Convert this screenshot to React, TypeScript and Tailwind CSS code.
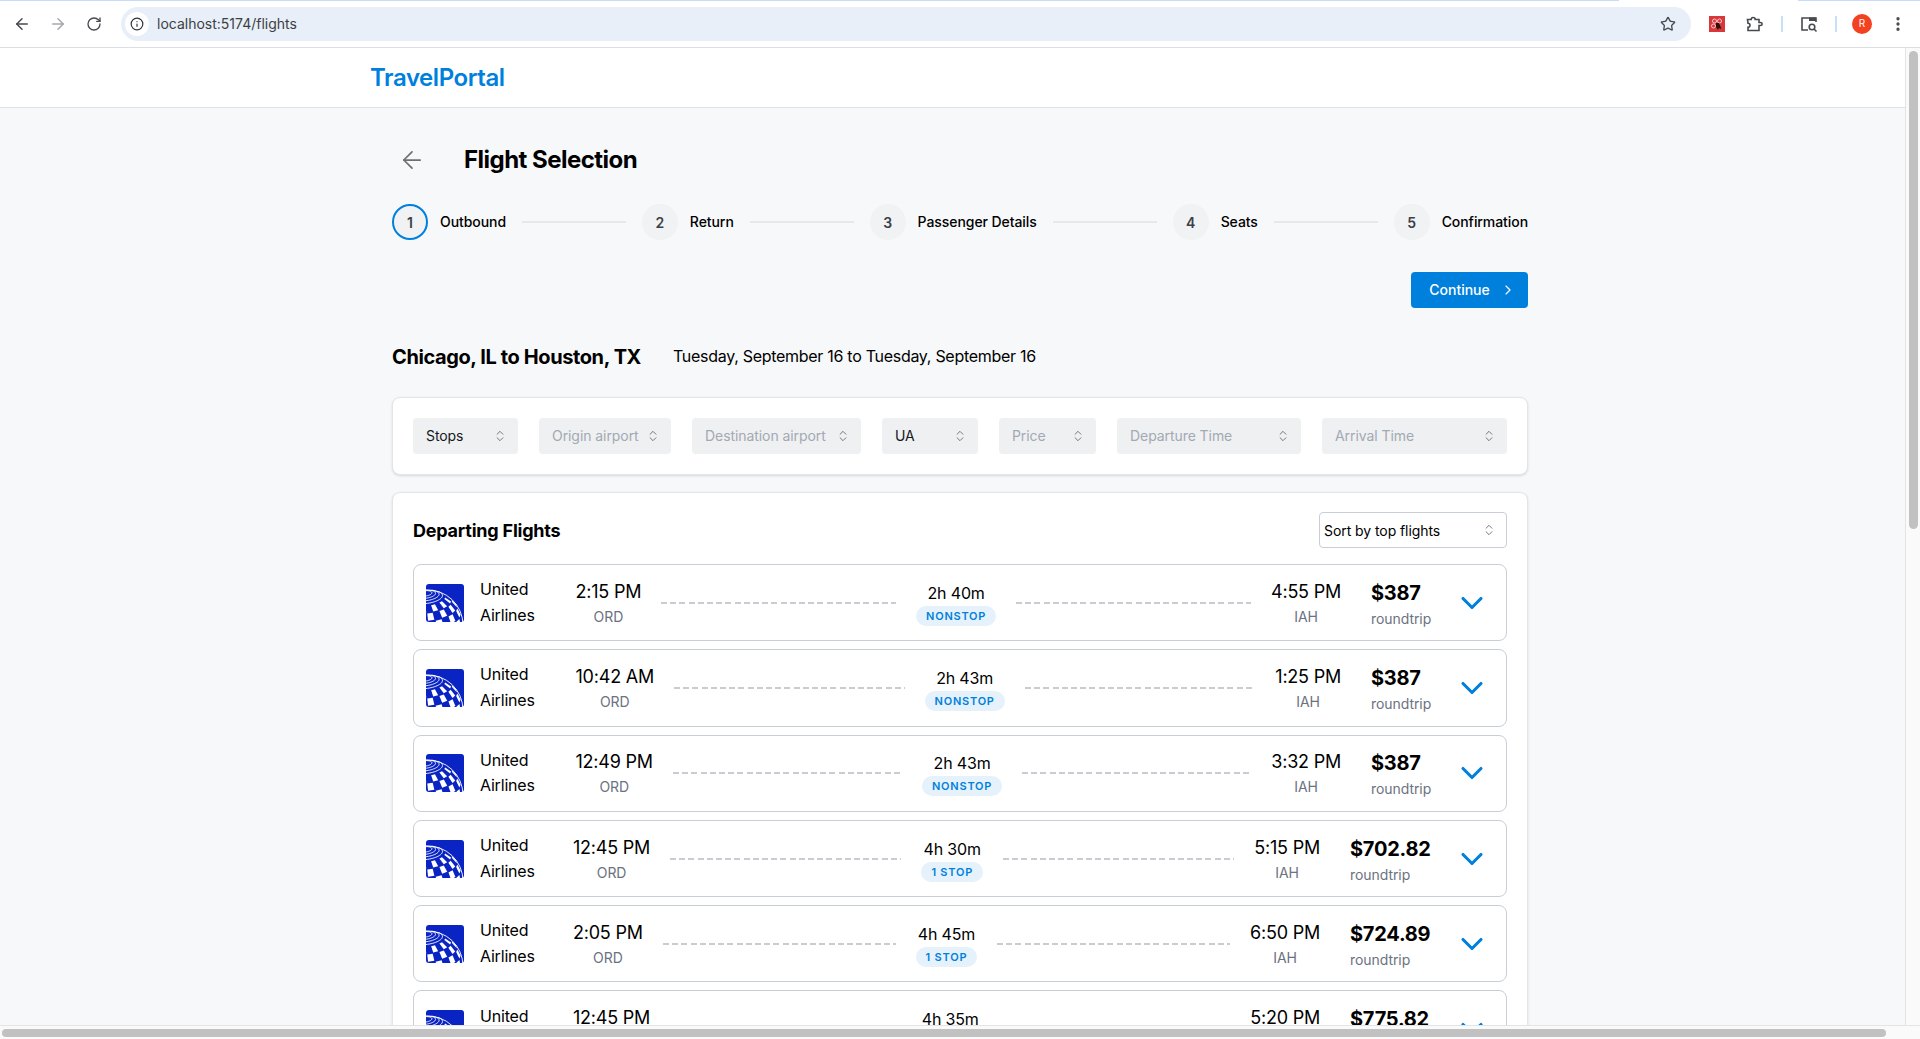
import { Fragment } from "react"
import { ArrowLeft, ArrowRight, ChevronDown, ChevronRight, ChevronsUpDown, EllipsisVertical, Info, RotateCw, Star } from "lucide-react"

const steps = ["Outbound", "Return", "Passenger Details", "Seats", "Confirmation"]

const filters = [
  { label: "Stops", width: "w-[105px]", active: true },
  { label: "Origin airport", width: "w-[132px]", active: false },
  { label: "Destination airport", width: "w-[169px]", active: false },
  { label: "UA", width: "w-[96px]", active: true },
  { label: "Price", width: "w-[97px]", active: false },
  { label: "Departure Time", width: "w-[184px]", active: false },
  { label: "Arrival Time", width: "w-[185px]", active: false },
]

const flights = [
  { depart: "2:15 PM", arrive: "4:55 PM", duration: "2h 40m", stops: "NONSTOP", price: "$387", wide: false },
  { depart: "10:42 AM", arrive: "1:25 PM", duration: "2h 43m", stops: "NONSTOP", price: "$387", wide: false },
  { depart: "12:49 PM", arrive: "3:32 PM", duration: "2h 43m", stops: "NONSTOP", price: "$387", wide: false },
  { depart: "12:45 PM", arrive: "5:15 PM", duration: "4h 30m", stops: "1 STOP", price: "$702.82", wide: true },
  { depart: "2:05 PM", arrive: "6:50 PM", duration: "4h 45m", stops: "1 STOP", price: "$724.89", wide: true },
  { depart: "12:45 PM", arrive: "5:20 PM", duration: "4h 35m", stops: "1 STOP", price: "$775.82", wide: true },
]

// orthographic sphere for the logo: checker cells, thin rings near the pole
function project(lat: number, lon: number) {
  const tilt = (22 * Math.PI) / 180
  const roll = (6 * Math.PI) / 180
  const la = (lat * Math.PI) / 180
  const lo = (lon * Math.PI) / 180
  const x = Math.cos(la) * Math.sin(lo)
  const y = Math.sin(la)
  const z = Math.cos(la) * Math.cos(lo)
  const y2 = y * Math.cos(tilt) - z * Math.sin(tilt)
  const z2 = y * Math.sin(tilt) + z * Math.cos(tilt)
  const x3 = x * Math.cos(roll) - y2 * Math.sin(roll)
  const y3 = x * Math.sin(roll) + y2 * Math.cos(roll)
  return { x: 2 + 35 * x3, y: 41 - 35 * y3, z: z2 }
}

function globeCells() {
  const out: string[] = []
  for (let i = -6; i < 4; i++) {
    for (let j = -12; j < 12; j++) {
      if ((i + j) % 2 !== 0) continue
      const la = i * 14
      const lo = j * 14
      const pts = [project(la + 1, lo + 1), project(la + 1, lo + 13), project(la + 13, lo + 13), project(la + 13, lo + 1)]
      if (pts.some((p) => p.z < 0.02)) continue
      out.push(pts.map((p) => `${p.x.toFixed(2)},${p.y.toFixed(2)}`).join(" "))
    }
  }
  return out
}

function globeRings() {
  const out: string[] = []
  for (const lat of [60, 66, 72, 78]) {
    const pts: string[] = []
    for (let lon = -180; lon <= 180; lon += 6) {
      const p = project(lat, lon)
      if (p.z > 0) pts.push(`${p.x.toFixed(2)},${p.y.toFixed(2)}`)
    }
    out.push(pts.join(" "))
  }
  return out
}

const cells = globeCells()
const rings = globeRings()

function UnitedLogo() {
  return (
    <svg width="38" height="38" viewBox="0 0 38 38" className="shrink-0">
      <rect width="38" height="38" rx="3" fill="#0a24c4" />
      {cells.map((c) => (
        <polygon key={c} points={c} fill="#fff" />
      ))}
      {rings.map((r) => (
        <polyline key={r} points={r} fill="none" stroke="#fff" strokeWidth="0.9" />
      ))}
      <path d="M0 6.1A35 35 0 0 1 37 41" fill="none" stroke="#fff" strokeWidth="0.9" />
    </svg>
  )
}

function BrowserBar() {
  return (
    <div className="relative flex h-[48px] shrink-0 items-center border-b border-[#dcdee1] bg-white">
      <div className="absolute inset-x-0 top-0 flex h-[1px]">
        <div className="w-[1619px] bg-[#c6dcf8]" />
        <div className="w-[179px]" />
        <div className="flex-1 bg-[#c6dcf8]" />
      </div>
      <div className="flex w-[121px] shrink-0 items-center pl-[13px]">
        <ArrowLeft size={18} strokeWidth={2} className="text-[#474a4f]" />
        <ArrowRight size={18} strokeWidth={2} className="ml-[18px] text-[#a5a7aa]" />
        <RotateCw size={16} strokeWidth={2} className="ml-[19px] text-[#474a4f]" />
      </div>
      <div className="flex h-[34px] w-[1570px] shrink-0 items-center rounded-full bg-[#e8eff9] pl-[4px] pr-[15px]">
        <div className="flex h-[24px] w-[24px] items-center justify-center rounded-full bg-white">
          <Info size={14} strokeWidth={2} className="text-[#2f3236]" />
        </div>
        <span className="ml-[8px] text-[14px] text-[#3c3f43]">localhost:5174/flights</span>
        <Star size={16} strokeWidth={2} className="ml-auto text-[#474a4f]" />
      </div>
      <div className="ml-[18px] flex h-[16px] w-[16px] shrink-0 items-center justify-center bg-[#d8383a]">
        <svg width="14" height="14" viewBox="0 0 14 14">
          <circle cx="4.5" cy="4" r="2" fill="none" stroke="#f9d5d4" strokeWidth="0.9" />
          <circle cx="9.5" cy="4" r="2" fill="none" stroke="#f9d5d4" strokeWidth="0.9" />
          <circle cx="3.5" cy="9" r="2" fill="none" stroke="#f9d5d4" strokeWidth="0.9" />
          <path d="M6 6l3 0 2.5 6-2.5-1-1 2-2-3z" fill="#2b1010" />
        </svg>
      </div>
      <svg width="18" height="18" viewBox="0 0 18 18" className="ml-[20px] shrink-0" fill="none" stroke="#474a4f" strokeWidth="1.6">
        <path d="M2.5 4.5h3.7a2 2 0 0 1 4 0H14v3h1.6a1.5 1.5 0 0 1 0 3H14v5H3v-3.2a2 2 0 0 0 0-4z" />
      </svg>
      <div className="ml-[18px] h-[16px] w-[2px] shrink-0 bg-[#c9dff8]" />
      <svg width="18" height="18" viewBox="0 0 18 18" className="ml-[17px] shrink-0" fill="none" stroke="#474a4f" strokeWidth="1.6">
        <path d="M8 15H2V3h14v4" />
        <rect x="9" y="2.5" width="7" height="3.5" fill="#474a4f" stroke="none" />
        <circle cx="12" cy="12" r="2.8" />
        <path d="M14 14l2.5 2.5" />
      </svg>
      <div className="ml-[17px] h-[16px] w-[2px] shrink-0 bg-[#c9dff8]" />
      <div className="ml-[15px] flex h-[20px] w-[20px] shrink-0 items-center justify-center rounded-full bg-[#f4411f] text-[10px] text-white">R</div>
      <EllipsisVertical size={18} strokeWidth={2.4} className="ml-[17px] shrink-0 text-[#474a4f]" />
    </div>
  )
}

function Stepper() {
  return (
    <div className="mt-[24px] flex h-[36px] items-center">
      {steps.map((step, i) => (
        <Fragment key={step}>
          <div
            className={
              i === 0
                ? "flex h-[36px] w-[36px] shrink-0 items-center justify-center rounded-full border-2 border-[#0080dd] bg-[#f1f2f4] text-[14px] font-semibold text-[#3a4048]"
                : "flex h-[36px] w-[36px] shrink-0 items-center justify-center rounded-full bg-[#f1f2f4] text-[14px] font-semibold text-[#3a4048]"
            }
          >
            {i + 1}
          </div>
          <span className="ml-[12px] whitespace-nowrap pb-[2px] text-[14px] font-medium tracking-[-0.005em] text-black">{step}</span>
          {i < steps.length - 1 && <div className="mx-[16px] h-[2px] flex-1 bg-[#e6e8eb]" />}
        </Fragment>
      ))}
    </div>
  )
}

function FilterSelect({ label, width, active }: { label: string; width: string; active: boolean }) {
  return (
    <div className={`flex h-[36px] shrink-0 items-center justify-between rounded bg-[#eff0f2] pl-[13px] pr-[11px] ${width}`}>
      <span className={active ? "pb-[2px] text-[14px] tracking-[-0.005em] text-[#16181c]" : "pb-[2px] text-[14px] tracking-[-0.005em] text-[#a3a9b2]"}>{label}</span>
      <ChevronsUpDown size={14} strokeWidth={1.5} className="text-[#5f6670]" />
    </div>
  )
}

function DashedLine() {
  return <div className="mx-[20px] h-[2px] flex-1 bg-[repeating-linear-gradient(90deg,#c9cdd3_0_6px,transparent_6px_9.2px)]" />
}

function FlightRow({ flight }: { flight: (typeof flights)[number] }) {
  return (
    <div className="mb-[8px] flex h-[77.3px] items-center rounded-[8px] border border-[#c8ced6] bg-white pl-[12px] pr-[16px]">
      <UnitedLogo />
      <div className="ml-[16px] w-[56px] shrink-0 text-[16px] leading-[25.6px] tracking-[-0.012em] text-black">
        United
        <br />
        Airlines
      </div>
      <div className={flight.wide ? "ml-[37px] shrink-0 text-center" : "ml-[39.5px] shrink-0 text-center"}>
        <div className="text-[18px] leading-[28px] tracking-[-0.012em] text-black">{flight.depart}</div>
        <div className="text-[14px] leading-[22px] tracking-[-0.005em] text-[#6b7280]">ORD</div>
      </div>
      <DashedLine />
      <div className="flex shrink-0 flex-col items-center pt-[1px]">
        <div className="text-[16px] leading-[24px] tracking-[-0.01em] text-black">{flight.duration}</div>
        <div className="mt-[1px] rounded-full bg-[#e5f2fb] px-[10px] text-[11px] font-semibold leading-[20px] tracking-[0.07em] text-[#0080dd]">{flight.stops}</div>
      </div>
      <DashedLine />
      <div className="shrink-0 text-center">
        <div className="text-[18px] leading-[28px] tracking-[-0.012em] text-black">{flight.arrive}</div>
        <div className="text-[14px] leading-[22px] tracking-[-0.005em] text-[#6b7280]">IAH</div>
      </div>
      <div className={flight.wide ? "ml-[30px] w-[80px] shrink-0 pt-[2px]" : "ml-[30px] w-[59px] shrink-0 pt-[2px]"}>
        <div className="text-[20px] font-bold leading-[30px] tracking-[-0.012em] text-black">{flight.price}</div>
        <div className="whitespace-nowrap text-[14px] leading-[22px] tracking-[-0.005em] text-[#6b7280]">roundtrip</div>
      </div>
      <ChevronDown size={36} strokeWidth={2.1} className="ml-[24px] shrink-0 text-[#0080dd]" />
    </div>
  )
}

export default function App() {
  return (
    <div className="flex h-screen flex-col overflow-hidden bg-[#f7f8fa] font-['Inter',sans-serif] text-black">
      <BrowserBar />
      <div className="flex min-h-0 flex-1">
        <div className="min-w-0 flex-1 overflow-hidden">
          {/* Navbar */}
          <header className="flex h-[60px] items-center border-b border-[#dfe1e4] bg-white pl-[370px]">
            <span className="text-[24px] font-semibold tracking-[-0.018em] text-[#0080dd]">TravelPortal</span>
          </header>

          {/* Content */}
          <main className="ml-[392px] w-[1136px] pt-[32px]">
            <div className="flex h-[40px] items-center">
              <div className="flex w-[40px] items-center justify-center">
                <ArrowLeft size={28} strokeWidth={1.5} className="text-[#6b7075]" />
              </div>
              <h1 className="ml-[32px] text-[24px] font-bold tracking-[-0.022em]">Flight Selection</h1>
            </div>

            <Stepper />

            <div className="mt-[32px] flex justify-end">
              <button className="flex h-[36px] w-[117px] items-center justify-center gap-[10px] rounded bg-[#0080dd] pb-[1px] pl-[6px] text-[14px] font-medium text-white">
                Continue
                <ChevronRight size={16} strokeWidth={1.75} />
              </button>
            </div>

            <div className="mt-[33px] flex h-[32px] items-center">
              <h2 className="text-[20px] font-bold tracking-[-0.02em]">Chicago, IL to Houston, TX</h2>
              <span className="ml-[32px] pb-[2px] text-[16px] tracking-[-0.018em]">Tuesday, September 16 to Tuesday, September 16</span>
            </div>

            <div className="mt-[24px] flex gap-[21px] rounded-[8px] border border-[#e3e5e8] bg-white p-[20px] shadow-sm">
              {filters.map((f) => (
                <FilterSelect key={f.label} {...f} />
              ))}
            </div>

            <div className="mt-[17px] rounded-[8px] border border-[#e3e5e8] bg-white px-[20px] pt-[19px] shadow-sm">
              <div className="mb-[16px] flex h-[36px] items-center justify-between">
                <h3 className="text-[18px] font-bold tracking-[-0.012em]">Departing Flights</h3>
                <div className="flex h-[36px] w-[188px] items-center justify-between rounded border border-[#c8ced6] pl-[4px] pr-[10px] text-[14px] tracking-[-0.005em]">
                  Sort by top flights
                  <ChevronsUpDown size={14} strokeWidth={1.5} className="text-[#5f6670]" />
                </div>
              </div>
              {flights.map((flight, i) => (
                <FlightRow key={i} flight={flight} />
              ))}
            </div>
          </main>
        </div>

        {/* vertical scrollbar */}
        <div className="w-[15px] shrink-0 border-l border-[#e3e4e6] bg-[#fafafa] pl-[3px] pt-[3px]">
          <div className="h-[478px] w-[9px] rounded-full bg-[#c1c1c1]" />
        </div>
      </div>

      {/* horizontal scrollbar */}
      <div className="h-[14px] shrink-0 border-t border-[#e3e4e6] bg-[#fafafa] pl-[2px] pt-[3px]">
        <div className="h-[8px] w-[1884px] rounded-full bg-[#c1c1c1]" />
      </div>
    </div>
  )
}
